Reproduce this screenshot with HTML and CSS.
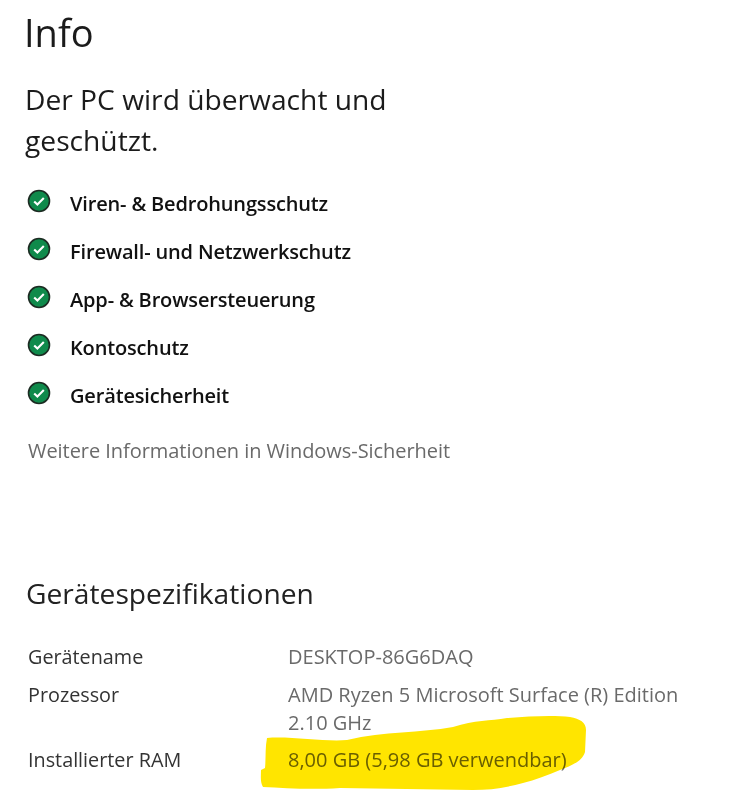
FILE: index.html
```html
<!DOCTYPE html>
<html lang="de">
<head>
<meta charset="UTF-8" />
<title>Info</title>
<link rel="stylesheet" href="styles.css">
</head>
<body>
  <main class="page">
    <h1>Info</h1>
    <h2 class="status-title">Der PC wird überwacht und<br>geschützt.</h2>

    <ul class="checks">
      <li><svg class="check" viewBox="0 0 24 24"><circle cx="12" cy="12" r="10.5" fill="#0f8a4b" stroke="#1c2b22" stroke-width="1.6"/><path d="M7.2 12.4l3.2 3.2 6.4-6.6" fill="none" stroke="#fff" stroke-width="2.1"/></svg>Viren- &amp; Bedrohungsschutz</li>
      <li><svg class="check" viewBox="0 0 24 24"><circle cx="12" cy="12" r="10.5" fill="#0f8a4b" stroke="#1c2b22" stroke-width="1.6"/><path d="M7.2 12.4l3.2 3.2 6.4-6.6" fill="none" stroke="#fff" stroke-width="2.1"/></svg>Firewall- und Netzwerkschutz</li>
      <li><svg class="check" viewBox="0 0 24 24"><circle cx="12" cy="12" r="10.5" fill="#0f8a4b" stroke="#1c2b22" stroke-width="1.6"/><path d="M7.2 12.4l3.2 3.2 6.4-6.6" fill="none" stroke="#fff" stroke-width="2.1"/></svg>App- &amp; Browsersteuerung</li>
      <li><svg class="check" viewBox="0 0 24 24"><circle cx="12" cy="12" r="10.5" fill="#0f8a4b" stroke="#1c2b22" stroke-width="1.6"/><path d="M7.2 12.4l3.2 3.2 6.4-6.6" fill="none" stroke="#fff" stroke-width="2.1"/></svg>Kontoschutz</li>
      <li><svg class="check" viewBox="0 0 24 24"><circle cx="12" cy="12" r="10.5" fill="#0f8a4b" stroke="#1c2b22" stroke-width="1.6"/><path d="M7.2 12.4l3.2 3.2 6.4-6.6" fill="none" stroke="#fff" stroke-width="2.1"/></svg>Gerätesicherheit</li>
    </ul>

    <p class="more">Weitere Informationen in Windows-Sicherheit</p>

    <h2 class="specs-title">Gerätespezifikationen</h2>
    <dl class="specs">
      <dt>Gerätename</dt>
      <dd>DESKTOP-86G6DAQ</dd>
      <dt>Prozessor</dt>
      <dd>AMD Ryzen 5 Microsoft Surface (R) Edition<br>2.10 GHz</dd>
      <dt>Installierter RAM</dt>
      <dd>8,00 GB (5,98 GB verwendbar)</dd>
    </dl>
  </main>

  <!-- marker scribble over the RAM row -->
  <svg class="marker" viewBox="0 0 734 795" width="734" height="795">
    <path d="M267 738C290 736 325 742 347 740C385 731 420 733 453 727C475 720 490 721 507 718C530 716 555 715 570 717C580 719 586 722 586 730L585 752C582 762 570 766 560 770C548 775 535 780 523 783C505 788 490 790 473 790L340 788C310 790 285 788 263 787C260 782 261 776 261 770L265 768C266 758 265 748 267 738Z" fill="#ffe500"/>
  </svg>
</body>
</html>
```

FILE: styles.css
```css
* {
  box-sizing: border-box;
}
html, body {
  height: 795px;
  overflow: hidden;
}
body {
  margin: 0;
  position: relative;
  background: #fff;
  color: #1b1b1b;
  font-family: "Open Sans", "Noto Sans", sans-serif;
}
.page {
  padding: 7px 0 0 24px;
}
h1 {
  margin: 0;
  font-size: 38px;
  font-weight: 400;
  line-height: 50px;
}
.status-title {
  margin: 22px 0 0 1px;
  font-size: 28.2px;
  font-weight: 400;
  line-height: 41px;
}
/* Security checks */
.checks {
  list-style: none;
  margin: 18px 0 0 3px;
  padding: 0;
}
.checks li {
  display: flex;
  align-items: center;
  gap: 19px;
  height: 48px;
  font-size: 20px;
  font-weight: 600;
  letter-spacing: -0.16px;
  color: #111;
}
.check {
  width: 24px;
  height: 24px;
  flex: none;
  position: relative;
  top: -2px;
}
.more {
  margin: 19px 0 0 4px;
  font-size: 20px;
  line-height: 26px;
  letter-spacing: -0.05px;
  color: #6a6a6a;
}
/* Device specs */
.specs-title {
  margin: 111px 0 0 2px;
  font-size: 28.2px;
  font-weight: 400;
  line-height: 36px;
  color: #222;
}
.specs {
  display: grid;
  grid-template-columns: 260px 1fr;
  row-gap: 9.5px;
  margin: 32px 0 0 4px;
  font-size: 19.8px;
  line-height: 28px;
}
.specs dt {
  color: #333;
}
.specs dd {
  margin: 0;
  color: #6a6a6a;
  font-size: 20px;
}
.marker {
  position: absolute;
  top: 0;
  left: 0;
  mix-blend-mode: multiply;
  pointer-events: none;
}
```
